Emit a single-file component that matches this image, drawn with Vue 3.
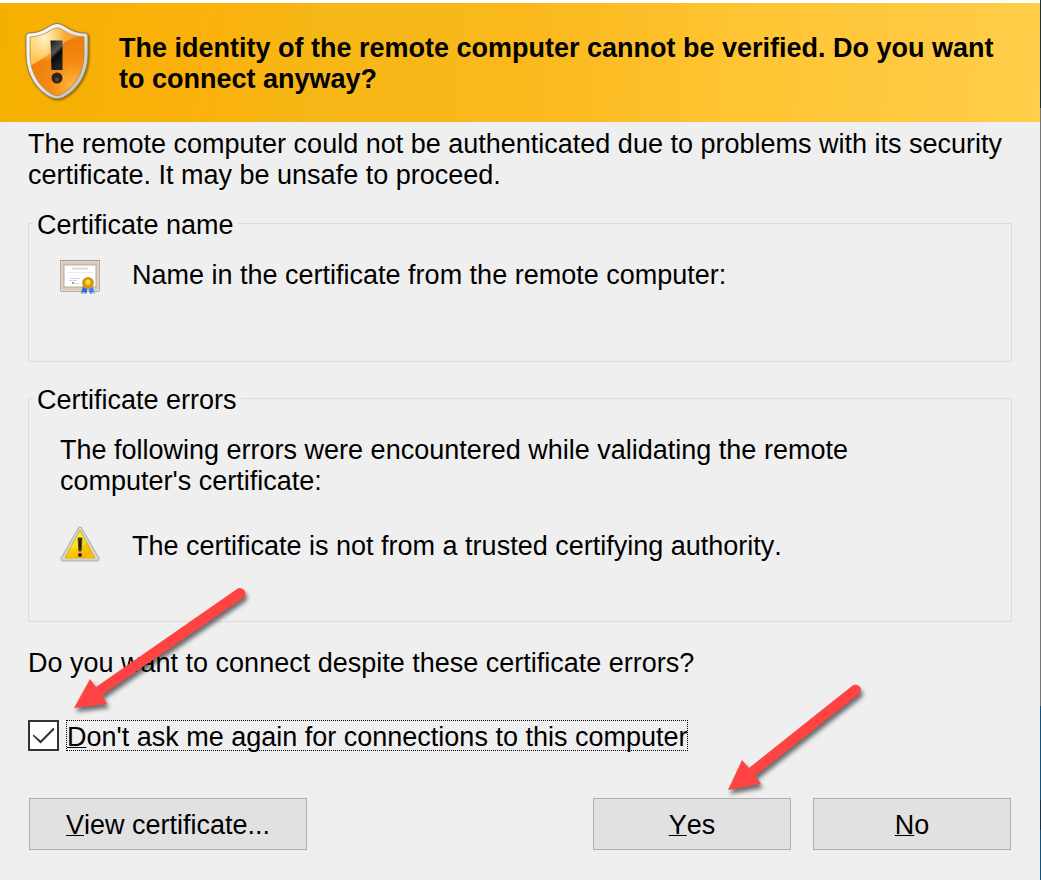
<script setup>
import { ref } from 'vue'

const remember = ref(true)
</script>

<template>
  <div class="desktop">
    <main class="dialog">
      <header class="banner">
        <svg class="shield" viewBox="0 0 68 80" aria-hidden="true">
          <defs>
            <linearGradient id="rim" x1="0" y1="0" x2="1" y2="1">
              <stop offset="0" stop-color="#ffffff" />
              <stop offset="0.5" stop-color="#e4e4e4" />
              <stop offset="1" stop-color="#b4b4b4" />
            </linearGradient>
            <linearGradient id="gold" x1="0" y1="0" x2="1" y2="0.3">
              <stop offset="0" stop-color="#ffd25c" />
              <stop offset="0.35" stop-color="#ffc24c" />
              <stop offset="1" stop-color="#ee8a12" />
            </linearGradient>
            <radialGradient id="amber" cx="0.72" cy="0.75" r="0.75">
              <stop offset="0" stop-color="#ffb93a" />
              <stop offset="0.45" stop-color="#f58a12" />
              <stop offset="1" stop-color="#ee7b08" />
            </radialGradient>
            <radialGradient id="shine" cx="0.3" cy="0.2" r="0.3">
              <stop offset="0" stop-color="#fff3c8" />
              <stop offset="1" stop-color="#fff3c8" stop-opacity="0" />
            </radialGradient>
            <linearGradient id="mark" x1="0" y1="0" x2="0.4" y2="1">
              <stop offset="0" stop-color="#161616" />
              <stop offset="0.45" stop-color="#555555" />
              <stop offset="0.6" stop-color="#080808" />
              <stop offset="1" stop-color="#222222" />
            </linearGradient>
            <clipPath id="inner">
              <path d="M33 6 C39 6 43 14 60 15 V32 C60 52 49 67 36 73 Q33 74.500 30 73 C17 67 6 52 6 32 V15 C23 14 27 6 33 6Z" />
            </clipPath>
          </defs>
          <path class="shield-body" d="M33 1.500 C41 1.500 45 11 61 11 Q64 11 64 14 V32 C64 53 53 69 38 76 Q33 78 28 76 C13 69 2 53 2 32 V14 Q2 11 5 11 C21 11 25 1.500 33 1.500Z" fill="url(#rim)" stroke="#9a7b42" />
          <g clip-path="url(#inner)">
            <path d="M0 0H68V80H0Z" fill="url(#gold)" />
            <path d="M0 47 Q22 36 38 22 Q49 14 68 13 V80H0Z" fill="url(#amber)" />
            <path d="M0 0H68V80H0Z" fill="url(#shine)" />
          </g>
          <path d="M33 6 C39 6 43 14 60 15 V32 C60 52 49 67 36 73 Q33 74.500 30 73 C17 67 6 52 6 32 V15 C23 14 27 6 33 6Z" fill="none" stroke="#a88248" stroke-opacity="0.7" />
          <path d="M26.500 18.500H38.500V48H27.500Z" fill="url(#mark)" />
          <circle cx="33" cy="56" r="5.500" fill="#2c241c" />
          <circle cx="33" cy="57.500" r="2" fill="#5c4a30" />
        </svg>
        <h1>The identity of the remote computer cannot be verified. Do you want to connect anyway?</h1>
      </header>

      <form class="content" @submit.prevent>
        <p>The remote computer could not be authenticated due to problems with its security certificate. It may be unsafe to proceed.</p>

        <fieldset class="name-group">
          <legend>Certificate name</legend>
          <div class="row">
            <svg class="icon" viewBox="0 0 40 36" aria-hidden="true">
              <rect x="0.500" y="0.500" width="39" height="31" rx="1" fill="#dccbbd" stroke="#b5aaa2" />
              <path d="M0 0.500H40" stroke="#9b9693" />
              <rect x="1.500" y="1.500" width="37" height="29" fill="none" stroke="#eee3d9" stroke-dasharray="1 1" />
              <rect x="4" y="5" width="32" height="22" fill="#ffffff" stroke="#bba894" />
              <path d="M12 8.500H28" stroke="#d3dae2" stroke-width="2" />
              <path d="M7 12.500H33" stroke="#eaeaea" />
              <path d="M10 18.500H20M9 20.500H17M12 23.500H19" stroke="#d2d4d8" />
              <rect x="12" y="22" width="2" height="2" fill="#8aa5c8" />
              <path d="M23 26L21 34L24 33L26 34L28 27Z" fill="#2867e8" />
              <path d="M28 27L30 34L32 33L35 34L32 25Z" fill="#3a80f5" />
              <path d="M21 34L24 32L25 34M31 34L33 32L35 34" fill="none" stroke="#b9c7dc" />
              <circle cx="28" cy="23" r="6" fill="#dc9b0c" />
              <circle cx="28" cy="22.500" r="4" fill="#f0b622" stroke="#c98a08" />
              <circle cx="28" cy="22" r="2" fill="#ffd860" />
            </svg>
            <span>Name in the certificate from the remote computer:</span>
          </div>
        </fieldset>

        <fieldset class="error-group">
          <legend>Certificate errors</legend>
          <p class="intro">The following errors were encountered while validating the remote computer's certificate:</p>
          <div class="row">
            <svg class="icon" viewBox="0 0 40 36" aria-hidden="true">
              <defs>
                <linearGradient id="sun" x1="0" y1="0" x2="1" y2="1">
                  <stop offset="0" stop-color="#fff07a" />
                  <stop offset="0.5" stop-color="#ffe018" />
                  <stop offset="0.8" stop-color="#f5b500" />
                  <stop offset="1" stop-color="#ffd51d" />
                </linearGradient>
              </defs>
              <path d="M20 3L37 33H3Z" fill="#b0b0b0" stroke="#b0b0b0" stroke-width="5" stroke-linejoin="round" />
              <path d="M20 3L37 33H3Z" fill="#d6d6d6" stroke="#d6d6d6" stroke-width="3" stroke-linejoin="round" />
              <path d="M20 4L35 32H5Z" fill="url(#sun)" stroke="#d9ad16" stroke-linejoin="round" />
              <path d="M20 19Q28 19 28 18L35 32H5L11 22Q16 24 20 19Z" fill="#f5b800" fill-opacity="0.55" />
              <path d="M18 12H22L21 25H19Z" fill="#202018" stroke="#4b4520" />
              <circle cx="20" cy="29" r="2" fill="#29241a" />
            </svg>
            <span>The certificate is not from a trusted certifying authority.</span>
          </div>
        </fieldset>

        <p>Do you want to connect despite these certificate errors?</p>

        <div class="choice">
          <input id="remember" v-model="remember" type="checkbox">
          <label for="remember"><u>D</u>on't ask me again for connections to this computer</label>
        </div>

        <footer class="actions">
          <button type="button" class="view"><u>V</u>iew certificate...</button>
          <button type="submit"><u>Y</u>es</button>
          <button type="button"><u>N</u>o</button>
        </footer>
      </form>

      <svg class="arrow to-checkbox" viewBox="0 0 190 140" aria-hidden="true">
        <path d="M14 128L30 99L36 107L177 9A5 5 0 0 1 183 18L42 115L47 124Z" />
      </svg>
      <svg class="arrow to-yes" viewBox="0 0 160 130" aria-hidden="true">
        <path d="M18 120L32 90L39 98L142 16A5 5 0 0 1 149 24L45 106L51 114Z" />
      </svg>
    </main>
    <div class="backdrop" aria-hidden="true"></div>
  </div>
</template>

<style>
body {
  margin: 0;
  background: #efefef;
}
</style>

<style scoped>
.desktop {
  display: grid;
  grid-template-columns: 1fr 1px;
  min-height: 100vh;
  font: 27px/31px "Liberation Sans", Arial, sans-serif;
  font-kerning: none;
  color: #000;
}

.dialog {
  position: relative;
  border-top: 3px solid #fff;
  background: #efefef;
}

.backdrop {
  background: linear-gradient(#173246 0 108px, #757575 108px 706px, #10517d 706px 800px, #173246 800px 830px, #10517d 830px);
}

.banner {
  display: flex;
  align-items: center;
  gap: 27px;
  min-height: 119px;
  padding: 0 24px;
  box-sizing: border-box;
  background: linear-gradient(95deg, #f4b000, #fcb10c 20%, #f5b716 30%, #fab81c 50%, #ffc431 70%, #ffc83e 85%, #ffce4a);
}

.shield {
  flex: none;
  width: 68px;
  height: 80px;
  margin-bottom: 2px;
}

.shield-body {
  filter: drop-shadow(1px 1px 1px rgb(60 40 0 / 60%));
}

h1 {
  margin: 0;
  padding-top: 2px;
  font-size: 27px;
  line-height: 31px;
  font-weight: bold;
}

p {
  margin: 0;
}

.content {
  padding: 7px 28px 30px;
}

fieldset {
  min-width: 0;
  margin: 0;
  padding: 0 31px;
  border: 1px solid #dcdcdc;
  box-sizing: border-box;
}

legend {
  height: 27px;
  margin-left: -27px;
  padding: 0 4px;
}

.name-group {
  min-height: 152px;
  margin-top: 19px;
}

.error-group {
  min-height: 237px;
  margin-top: 23px;
  margin-bottom: 26px;
}

.row {
  display: flex;
  align-items: flex-start;
  gap: 32px;
  margin-top: 23px;
}

.icon {
  flex: none;
  width: 40px;
  height: 36px;
}

.intro {
  margin-top: 23px;
}

.error-group .row {
  align-items: flex-end;
  margin-top: 29px;
}

.choice {
  display: flex;
  align-items: center;
  gap: 8px;
  margin-top: 41px;
}

input {
  display: grid;
  place-items: center;
  flex: none;
  appearance: none;
  width: 31px;
  height: 31px;
  margin: 0;
  border: 2px solid #333;
  background: #fff;
}

input:checked::after {
  content: "";
  width: 22px;
  height: 16px;
  background: #333;
  clip-path: polygon(0 8px, 1px 7px, 8px 13px, 21px 0, 22px 2px, 8px 16px);
}

label {
  padding-top: 3px;
  line-height: 26px;
  outline: 1px dotted #000;
}

u {
  text-decoration-thickness: 1px;
  text-underline-offset: 1px;
  text-decoration-skip-ink: none;
}

.actions {
  display: flex;
  gap: 22px;
  margin: 47px 1px 0;
}

button {
  width: 198px;
  height: 52px;
  padding: 2px 0 0;
  border: 1px solid #adadad;
  border-radius: 0;
  background: #e1e1e1;
  color: #000;
  font: inherit;
  font-kerning: inherit;
}

.view {
  width: 278px;
  margin-right: auto;
}

.arrow {
  position: absolute;
  overflow: visible;
  pointer-events: none;
  fill: #ff4343;
  filter: drop-shadow(2px 4px 2px rgb(0 0 0 / 55%));
}

.to-checkbox {
  left: 60px;
  top: 577px;
  width: 190px;
  height: 140px;
}

.to-yes {
  left: 710px;
  top: 667px;
  width: 160px;
  height: 130px;
}
</style>
